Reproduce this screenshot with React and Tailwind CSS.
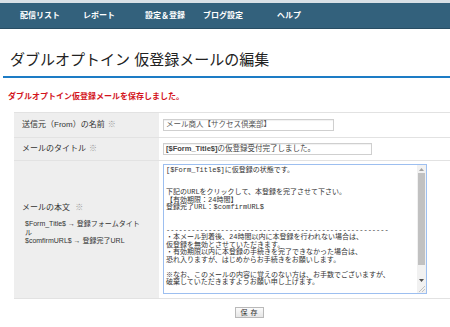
import React from "react";

const navItems = [
  { label: "配信リスト", w: "w-[63px]" },
  { label: "レポート", w: "w-[62px]" },
  { label: "設定＆登録", w: "w-[58px]" },
  { label: "ブログ設定", w: "w-[74px]" },
  { label: "ヘルプ", w: "w-[40px]" },
];

const bodyLines = [
  "[$Form_Title$]に仮登録の状態です。",
  "",
  "",
  "下記のURLをクリックして、本登録を完了させて下さい。",
  "【有効期限：24時間】",
  "登録完了URL：$comfirmURL$",
  "",
  "",
  "-----------------------------------------------------",
  "・本メール到着後、24時間以内に本登録を行われない場合は、",
  "仮登録を無効とさせていただきます。",
  "・有効期限以内に本登録の手続きを完了できなかった場合は、",
  "恐れ入りますが、はじめからお手続きをお願いします。",
  "",
  "※なお、このメールの内容に覚えのない方は、お手数でございますが、",
  "破棄していただきますようお願い申し上げます。",
];

export default function App() {
  return (
    <div className="w-[450px] h-[327px] overflow-hidden bg-white font-['Liberation_Sans','Noto_Sans_CJK_JP',sans-serif] text-[#333]">
      {/* ナビゲーション */}
      <div className="h-[3px] bg-[#d9e0e6]" />
      <nav className="h-[26px] bg-[#33617c] border-b border-[#284d63] flex items-center pl-[20px] text-[8px] font-bold text-white">
        {navItems.map((item) => (
          <span key={item.label} className={`${item.w} shrink-0`}>
            {item.label}
          </span>
        ))}
      </nav>

      <h1 className="mt-[22px] pl-[10px] text-[15px] leading-[18px] text-[#222] whitespace-nowrap">
        ダブルオプトイン 仮登録メールの編集
      </h1>
      <div className="ml-[3px] mt-[7px] h-[2px] bg-[#1d7cc5]" />

      <p className="mt-[14px] ml-[8px] text-[8px] leading-[10px] font-bold text-[#d3141c]">
        ダブルオプトイン仮登録メールを保存しました。
      </p>

      <div className="ml-[14px] w-[466px] mt-[10px]">
        <div className="border-t border-[#e2e2e2] text-[8px]">
          {/* 送信元 */}
          <div className="grid grid-cols-[145px_1fr] h-[25px] border-b border-[#e2e2e2]">
            <div className="bg-[#eeeeee] flex items-center pl-[8px] whitespace-nowrap">
              送信元（From）の名前 <span className="ml-[3px] text-[#999]">※</span>
            </div>
            <div className="flex items-center pl-[4px]">
              <div className="w-[171px] h-[12px] border border-[#cfcfcf] shadow-[inset_0_1px_1px_rgba(0,0,0,0.06)] flex items-center px-[2px] text-[7.5px] text-[#555] whitespace-nowrap">
                メール商人【サクセス倶楽部】
              </div>
            </div>
          </div>

          {/* タイトル */}
          <div className="grid grid-cols-[145px_1fr] h-[23px] border-b border-[#e2e2e2]">
            <div className="bg-[#eeeeee] flex items-center pl-[8px] whitespace-nowrap">
              メールのタイトル <span className="ml-[3px] text-[#999]">※</span>
            </div>
            <div className="flex items-center pl-[4px]">
              <div className="w-[209px] h-[12px] border border-[#cfcfcf] shadow-[inset_0_1px_1px_rgba(0,0,0,0.06)] flex items-center px-[2px] text-[7.5px] text-[#444] whitespace-nowrap">
                <span className="font-bold">[$Form_Title$]</span>の仮登録受付完了しました。
              </div>
            </div>
          </div>

          {/* 本文 */}
          <div className="grid grid-cols-[145px_1fr] h-[138px] border-b border-[#e2e2e2]">
            <div className="bg-[#eeeeee] flex flex-col justify-center pl-[8px] pb-[10px]">
              <div className="whitespace-nowrap leading-[10px]">
                メールの本文 <span className="ml-[3px] text-[#999]">※</span>
              </div>
              <div className="mt-[7px] pl-[3px] text-[7px] leading-[8.5px] whitespace-nowrap">
                <div>$Form_Title$ → 登録フォームタイト</div>
                <div>ル</div>
                <div>$comfirmURL$ → 登録完了URL</div>
              </div>
            </div>
            <div className="pl-[4px] pt-[3px]">
              <div className="w-[264px] h-[130px] border border-[#9dbff0] flex overflow-hidden">
                <div className="flex-1 pl-[2px] pt-[1.5px] font-['Liberation_Mono','Noto_Sans_CJK_JP',monospace] text-[7px] leading-[7.5px] text-[#333] whitespace-pre overflow-hidden">
                  {bodyLines.map((line, i) => (
                    <div key={i} className="h-[7.5px]">
                      {line}
                    </div>
                  ))}
                </div>
                {/* スクロールバー */}
                <div className="w-[9px] bg-[#f1f1f1] flex flex-col">
                  <div className="h-[8px] flex items-center justify-center">
                    <svg width="5" height="3" viewBox="0 0 5 3">
                      <path d="M0 3 L2.5 0 L5 3 Z" fill="#a3a3a3" />
                    </svg>
                  </div>
                  <div className="h-[92px] mx-[1px] bg-[#c1c1c1]" />
                  <div className="flex-1" />
                  <div className="h-[8px] flex items-center justify-center">
                    <svg width="5" height="3" viewBox="0 0 5 3">
                      <path d="M0 0 L5 0 L2.5 3 Z" fill="#505050" />
                    </svg>
                  </div>
                  <div className="h-[9px] flex items-end justify-end pr-[1px] pb-[1px]">
                    <svg width="6" height="6" viewBox="0 0 6 6">
                      <path d="M6 0 L0 6 M6 3 L3 6" stroke="#b5b5b5" strokeWidth="0.8" />
                    </svg>
                  </div>
                </div>
              </div>
            </div>
          </div>
        </div>

        <div className="flex justify-center pt-[8px] pb-[9px] pl-[4px]">
          <button className="w-[29px] h-[11px] border border-[#b9b9b9] bg-gradient-to-b from-[#fbfbfb] to-[#e6e6e6] text-[7px] leading-[9px] text-[#333] tracking-[3px] pl-[3px]">
            保存
          </button>
        </div>
      </div>
      <div className="border-t border-[#e8e8e8]" />
    </div>
  );
}
